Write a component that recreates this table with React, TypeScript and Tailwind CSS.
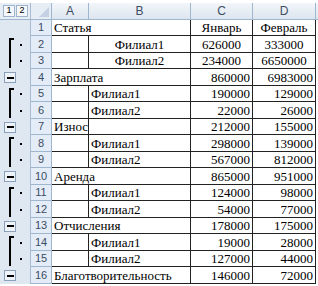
import React from "react";

type Row = {
  n: number;
  a?: string;
  b?: string;
  c?: string;
  d?: string;
  kind: "title" | "first" | "last" | "sum";
  center?: boolean;
};

const rows: Row[] = [
  { n: 1, a: "Статья", c: "Январь", d: "Февраль", kind: "title", center: true },
  { n: 2, b: "Филиал1", c: "626000", d: "333000", kind: "first", center: true },
  { n: 3, b: "Филиал2", c: "234000", d: "6650000", kind: "last", center: true },
  { n: 4, a: "Зарплата", c: "860000", d: "6983000", kind: "sum" },
  { n: 5, b: "Филиал1", c: "190000", d: "129000", kind: "first" },
  { n: 6, b: "Филиал2", c: "22000", d: "26000", kind: "last" },
  { n: 7, a: "Износ", c: "212000", d: "155000", kind: "sum" },
  { n: 8, b: "Филиал1", c: "298000", d: "139000", kind: "first" },
  { n: 9, b: "Филиал2", c: "567000", d: "812000", kind: "last" },
  { n: 10, a: "Аренда", c: "865000", d: "951000", kind: "sum" },
  { n: 11, b: "Филиал1", c: "124000", d: "98000", kind: "first" },
  { n: 12, b: "Филиал2", c: "54000", d: "77000", kind: "last" },
  { n: 13, a: "Отчисления", c: "178000", d: "175000", kind: "sum" },
  { n: 14, b: "Филиал1", c: "19000", d: "28000", kind: "first" },
  { n: 15, b: "Филиал2", c: "127000", d: "44000", kind: "last" },
  { n: 16, a: "Благотворительность", c: "146000", d: "72000", kind: "sum" },
];

// text in A that doesn't fit spills over B, so no border between them
const spills = (r: Row) => !!r.a && r.a !== "Износ";

function Outline({ kind }: { kind: Row["kind"] }) {
  if (kind === "sum") {
    return (
      <div className="w-[31px] h-full flex items-center border-r border-[#a9bcd3] bg-[#dfe7f1]">
        <div className="ml-[4px] w-[12px] h-[11px] border border-[#8aa0bb] bg-[#eef3f9] flex items-center justify-center">
          <div className="w-[7px] h-[2px] bg-black" />
        </div>
      </div>
    );
  }
  if (kind === "title") {
    return <div className="w-[31px] h-full border-r border-[#a9bcd3] bg-[#dfe7f1]" />;
  }
  return (
    <div className="w-[31px] h-full flex items-stretch border-r border-[#a9bcd3] bg-[#dfe7f1]">
      <div
        className={
          kind === "first"
            ? "ml-[9px] mt-[2px] w-[5px] flex items-start"
            : "ml-[9px] mb-[1px] w-[5px] flex items-start"
        }
      >
        <div className="w-[2px] h-full bg-black" />
        {kind === "first" && <div className="w-[3px] h-[2px] bg-black" />}
      </div>
      <div className="ml-[6px] flex items-center">
        <div className="w-[2px] h-[2px] bg-black" />
      </div>
    </div>
  );
}

export default function App() {
  const head =
    "h-full flex items-center justify-center border-r border-[#9eb6ce] text-[12px] text-[#3b4d63]";
  return (
    <div
      className="w-[318px] h-[286px] bg-white pt-[3px] overflow-hidden"
      style={{ fontFamily: '"Liberation Serif", serif' }}
    >
      {/* column headers */}
      <div
        className="flex h-[17px] border-b border-[#9eb6ce] bg-gradient-to-b from-[#f3f6fa] to-[#dde5ef]"
        style={{ fontFamily: '"Liberation Sans", sans-serif' }}
      >
        <div className="w-[31px] h-full flex items-center gap-[1px] pl-[3px] border-r border-[#a9bcd3] bg-[#e6edf5]">
          <div className="w-[12px] h-[12px] border border-[#9fb3ca] bg-[#f4f7fb] flex items-center justify-center text-[9px] text-black">
            1
          </div>
          <div className="w-[12px] h-[12px] border border-[#9fb3ca] bg-[#f4f7fb] flex items-center justify-center text-[9px] text-black">
            2
          </div>
        </div>
        <div className="w-[21px] h-full relative border-r border-[#9eb6ce] bg-[#e6edf5]">
          <svg className="absolute right-[2px] bottom-[2px]" width="10" height="10" viewBox="0 0 10 10">
            <polygon points="10,0 10,10 0,10" fill="#c3d1e2" />
          </svg>
        </div>
        <div className={`w-[37px] ${head}`}>A</div>
        <div className={`w-[102px] ${head}`}>B</div>
        <div className={`w-[62px] ${head}`}>C</div>
        <div className={`w-[63px] ${head}`}>D</div>
      </div>

      {rows.map((r, i) => (
        <div key={r.n} className={i % 2 === 0 ? "flex h-[16px]" : "flex h-[17px]"}>
          <Outline kind={r.kind} />
          <div
            className="w-[21px] h-full flex items-center justify-center border-r border-b border-[#9eb6ce] bg-[#e4ecf7] text-[11px] text-[#3b4d63]"
            style={{ fontFamily: '"Liberation Sans", sans-serif' }}
          >
            {r.n}
          </div>
          <div className="flex h-full border-b border-[#222] text-[13px] text-black leading-none">
            {spills(r) ? (
              <div className="w-[139px] h-full flex items-center pl-[2px] border-r border-[#222] whitespace-nowrap">
                {r.a}
              </div>
            ) : (
              <>
                <div className="w-[37px] h-full flex items-center pl-[2px] border-r border-[#222]">
                  {r.a}
                </div>
                <div
                  className={
                    r.center
                      ? "w-[102px] h-full flex items-center justify-center border-r border-[#222]"
                      : "w-[102px] h-full flex items-center pl-[2px] border-r border-[#222]"
                  }
                >
                  {r.b}
                </div>
              </>
            )}
            <div
              className={
                r.center
                  ? "w-[62px] h-full flex items-center justify-center border-r border-[#222]"
                  : "w-[62px] h-full flex items-center justify-end pr-[2px] border-r border-[#222]"
              }
            >
              {r.c}
            </div>
            <div
              className={
                r.center
                  ? "w-[63px] h-full flex items-center justify-center border-r border-[#222]"
                  : "w-[63px] h-full flex items-center justify-end pr-[2px] border-r border-[#222]"
              }
            >
              {r.d}
            </div>
          </div>
        </div>
      ))}
    </div>
  );
}
